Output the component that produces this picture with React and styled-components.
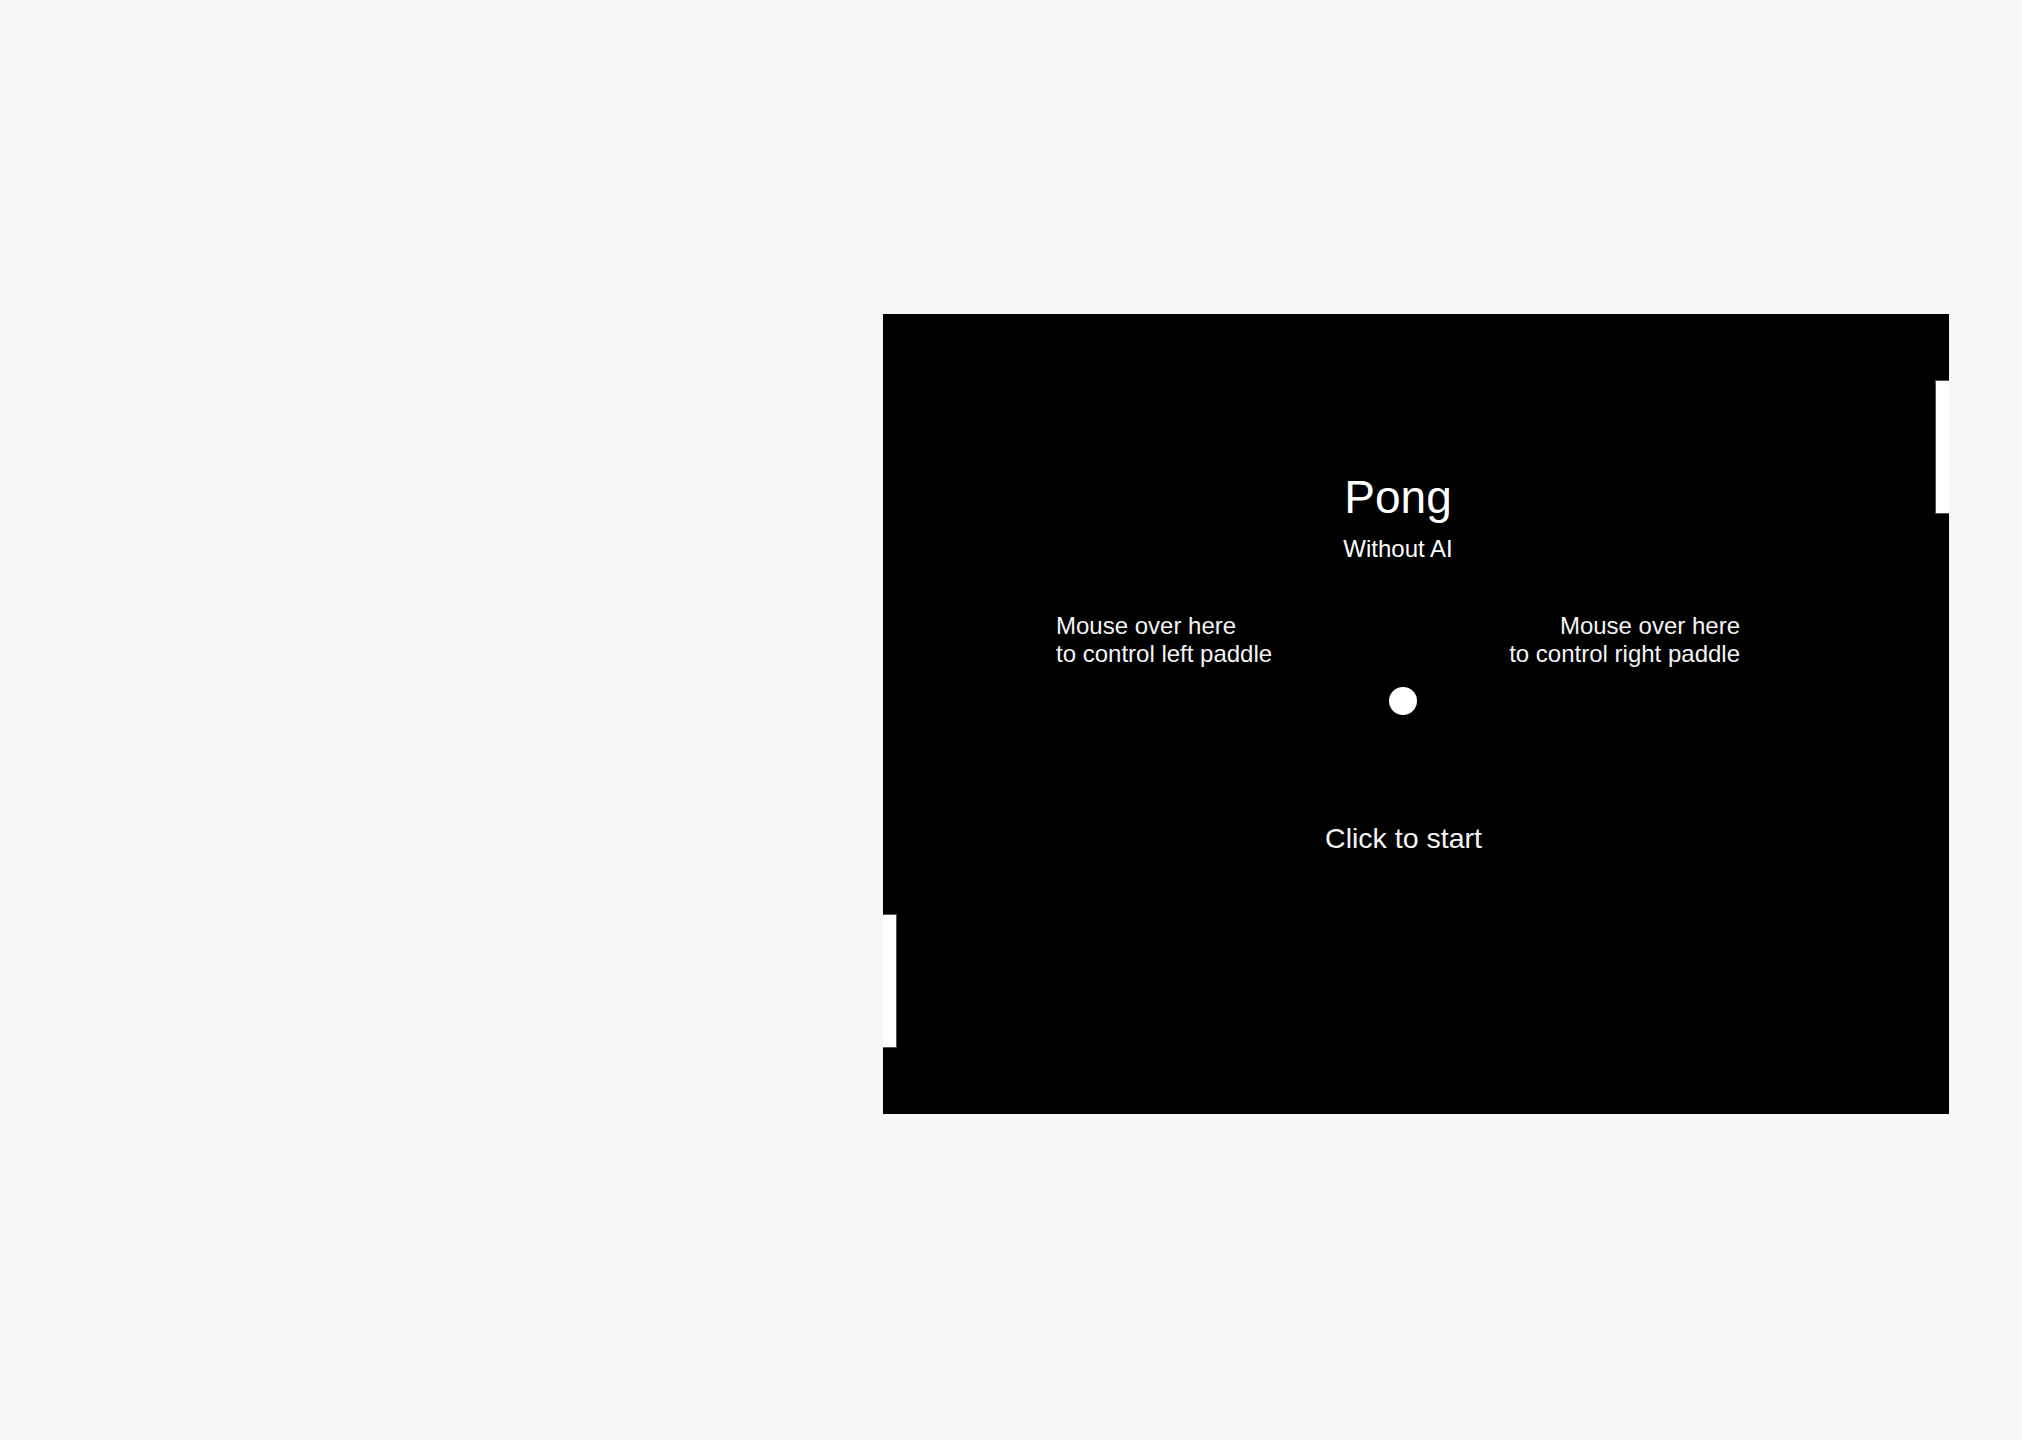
import React from 'react';
import styled, { createGlobalStyle } from 'styled-components';

const GlobalStyle = createGlobalStyle`
html, body {
  margin: 0;
  padding: 0;
  background: #f5f6f8;
  font-family: "Liberation Sans", Arial, Helvetica, sans-serif;
}
`;

const Page = styled.div`
min-height: 1440px;
padding: 314px 0 0 883px;
box-sizing: border-box;
`;

const Board = styled.div`
position: relative;
width: 1066px;
height: 800px;
background: #000;
color: #fff;
overflow: hidden;
`;

const Content = styled.div`
display: flex;
flex-direction: column;
align-items: center;
padding: 160px 36px 0 0;
`;

const Title = styled.h1`
margin: 0;
font-size: 46px;
font-weight: 400;
line-height: 1;
`;

const Subtitle = styled.div`
margin-top: 17px;
font-size: 24px;
line-height: 1;
`;

const Hints = styled.div`
display: flex;
justify-content: space-between;
width: 684px;
margin-top: 51px;
font-size: 24px;
line-height: 28px;
color: #f4f4f4;
`;

const Hint = styled.div`
text-align: ${p => (p.$right ? 'right' : 'left')};
`;

const Ball = styled.div`
width: 28px;
height: 28px;
margin: 19px 0 0 10px;
border-radius: 50%;
background: #fff;
`;

const Start = styled.div`
margin: 109px 0 0 11px;
font-size: 28.5px;
line-height: 1;
color: #f4f4f4;
`;

const Paddle = styled.div`
position: absolute;
top: ${p => p.$top}px;
${p => (p.$side === 'left' ? 'left: 0;' : 'right: 0;')}
width: 14px;
height: 134px;
box-sizing: border-box;
background: #fff;
border: 1px solid #555;
${p => (p.$side === 'left' ? 'border-left: none;' : 'border-right: none;')}
`;

const App = () => (
  <Page>
    <GlobalStyle />
    <Board>
      <Paddle $side="right" $top={66} />
      <Paddle $side="left" $top={600} />
      <Content>
        <Title>Pong</Title>
        <Subtitle>Without AI</Subtitle>
        <Hints>
          <Hint>Mouse over here<br />to control left paddle</Hint>
          <Hint $right>Mouse over here<br />to control right paddle</Hint>
        </Hints>
        <Ball />
        <Start>Click to start</Start>
      </Content>
    </Board>
  </Page>
);

export default App;
